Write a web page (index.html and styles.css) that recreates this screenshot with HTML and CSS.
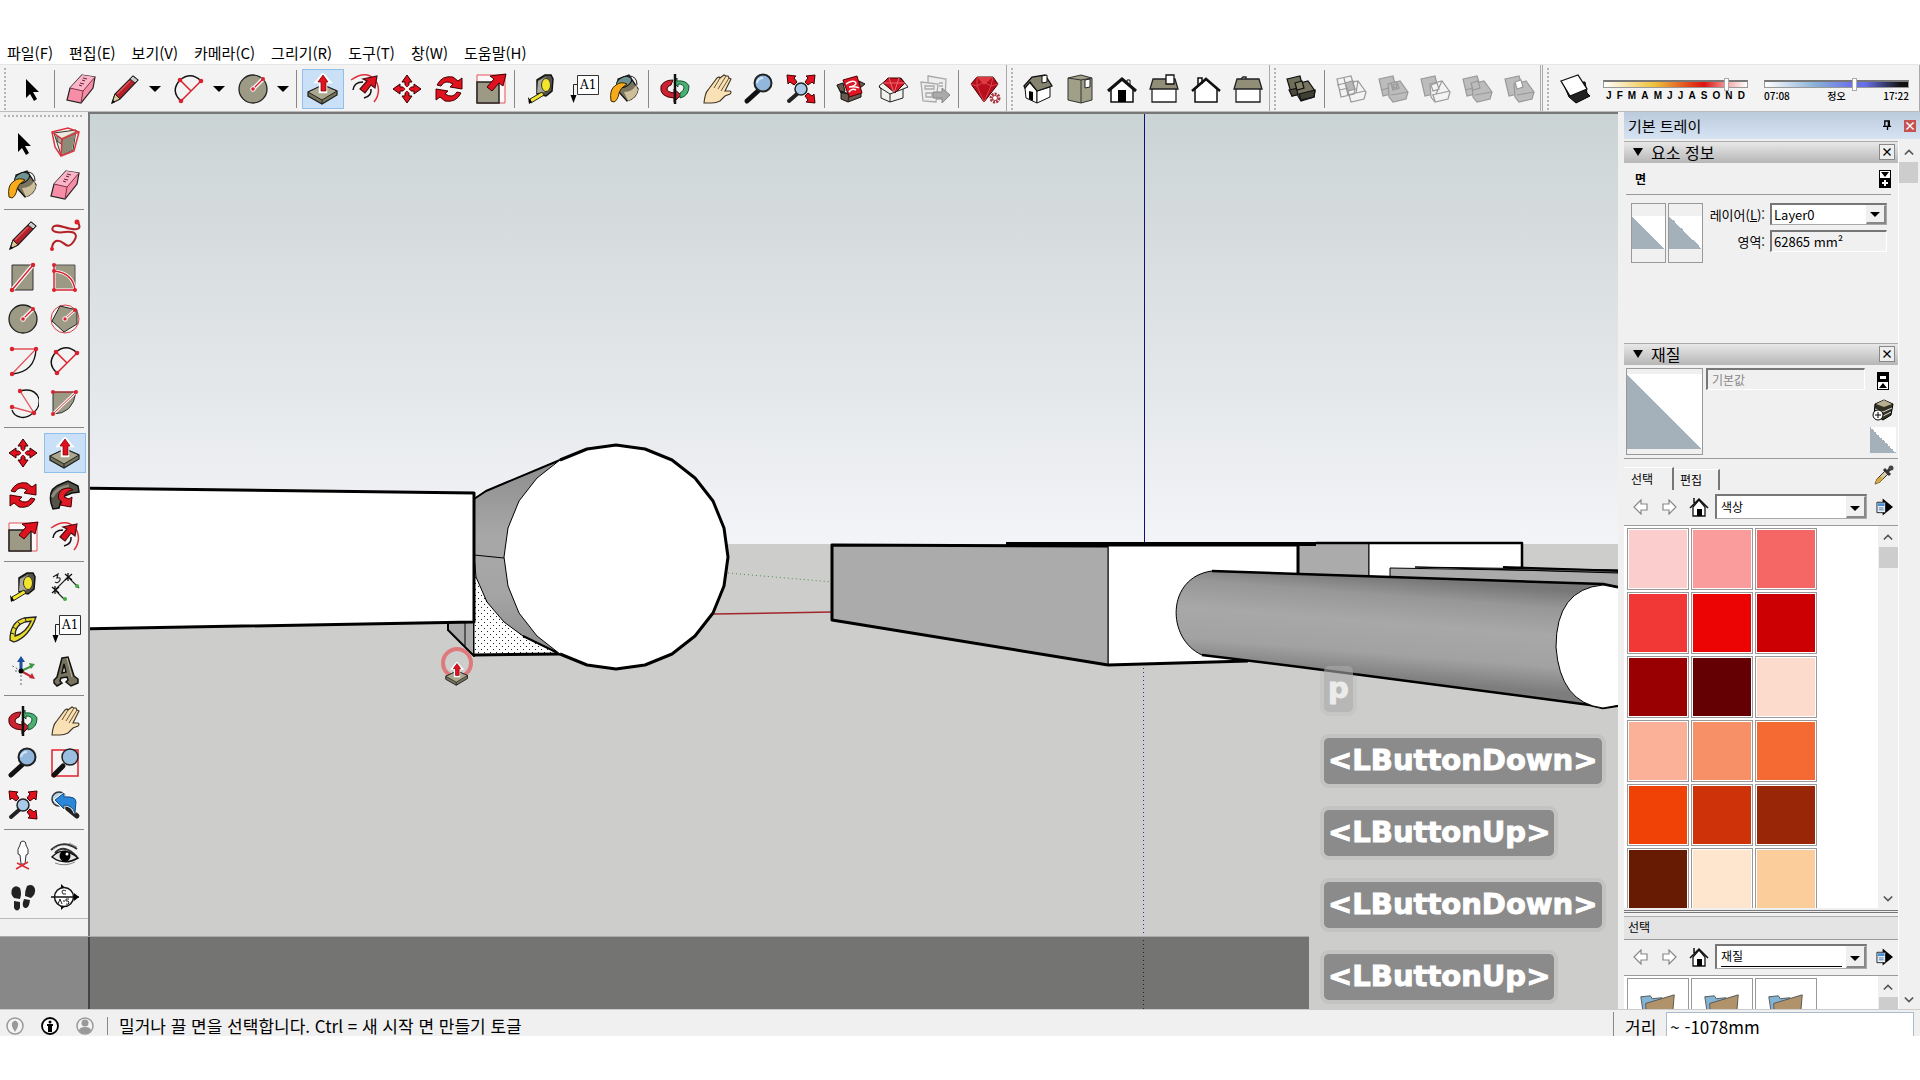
FILE: index.html
```html
<!DOCTYPE html>
<html lang="ko">
<head>
    <meta charset="UTF-8">
    <meta name="viewport" content="width=device-width, initial-scale=1.0">
    <title>SketchUp</title>
    <link rel="stylesheet" href="styles.css">
</head>
<body>
    <!-- Icon set -->
    <svg class="sprite" aria-hidden="true">
        <symbol id="i-select" viewBox="0 0 32 32"><path d="M11 6v19l4-4 4 7 3-2-4-7h6z"/></symbol>
        <symbol id="i-eraser" viewBox="0 0 32 32">
            <path d="M17 2l13 2-2 11-12 15-14-3 3-12z" fill="#f78da7" stroke="#222" stroke-width="1.2"/>
            <path d="M5 15l13 3L30 4 17 2z" fill="#fbb5c6"/><path d="M5 15l13 3-2 12M18 18L30 4" fill="none" stroke="#7d3347"/>
            <path d="M14 12l3 1M15 10l4 1M17 7l3 1M18 5l4 1" stroke="#5b2636"/>
        </symbol>
        <symbol id="i-pencil" viewBox="0 0 32 32">
            <path d="M3 30l3-9L24 3l5 4-18 19z" fill="#b5202a" stroke="#222" stroke-width="1.2"/>
            <path d="M3 30l3-9 5 5z" fill="#d9c897" stroke="#222"/><path d="M3 30l1-3 2 2z"/><path d="M21 6l5 4 3-3-5-4z" fill="#ccc" stroke="#222"/><path d="M8 21L21 8" stroke="#e4545b" stroke-width="1.5"/>
        </symbol>
        <symbol id="i-arc" viewBox="0 0 32 32">
            <path d="M7 7Q18-2 28 8M7 7Q-3 18 8 28" fill="none" stroke="#111" stroke-width="1.5"/>
            <path d="M7 7l11 11M28 8L8 28" stroke="#d8232f" stroke-width="1.5"/><g fill="#d8232f"><circle cx="7" cy="7" r="2.3"/><circle cx="28" cy="8" r="2.3"/><circle cx="8" cy="28" r="2.3"/></g>
        </symbol>
        <symbol id="i-circle" viewBox="0 0 32 32">
            <circle cx="16" cy="16" r="14" fill="#9c9a85" stroke="#222" stroke-width="1.3"/>
            <path d="M16 16L26 6" stroke="#fff" stroke-width="4"/><path d="M16 16L26 6" stroke="#d8232f" stroke-width="1.5"/>
            <circle cx="16" cy="16" r="2.3" fill="#d8232f" stroke="#fff"/><circle cx="26" cy="6" r="2" fill="#d8232f"/>
        </symbol>
        <symbol id="i-push" viewBox="0 0 32 32">
            <path d="M1 19l15-7 14 6v4L15 31 1 23z" fill="#77745c" stroke="#222" stroke-width="1.3"/>
            <path d="M1 19l15-7 14 6-15 9z" fill="#aaa78f" stroke="#222"/><path d="M15 27v4" stroke="#222"/>
            <path d="M16 1l7 8h-4v10h-6V9H9z" fill="#e0121f" stroke="#fff" stroke-width="2.5"/><path d="M16 2l5 7h-2v9h-5V9h-3z" fill="#e0121f" stroke="#700" stroke-width=".7"/>
        </symbol>
        <symbol id="i-offset" viewBox="0 0 32 32">
            <path d="M2 7Q19-5 28 10 32 20 25 29" fill="none" stroke="#e0303a" stroke-width="1.5"/>
            <path d="M4 17q1-8 10-8M15 25q8-2 7-9" fill="none" stroke="#111" stroke-width="1.5"/>
            <path d="M28 3l-2 12-4-3-6 8-5-4 7-8-4-2z" fill="#e0121f" stroke="#411" stroke-width="1.2"/>
        </symbol>
        <symbol id="i-move" viewBox="0 0 32 32">
            <path d="M16 2l5 7h-3v5h-4V9h-3zM16 30l5-7h-3v-5h-4v5h-3zM2 16l7-5v3h5v4H9v3zM30 16l-7-5v3h-5v4h5v3z" fill="#e0121f" stroke="#300" stroke-width="1"/>
            <path d="M12 12l8 8M20 12l-8 8" stroke="#fff" stroke-width="2"/>
        </symbol>
        <symbol id="i-rotate" viewBox="0 0 32 32">
            <g fill="#e0121f" stroke="#400" stroke-width="1"><path d="M4 12Q9 2 20 4l5 4 4-3v11l-12-2 3-3Q12 6 8 13z"/><path d="M28 20q-5 10-16 8l-5-4-4 3V16l12 2-3 3q8 5 12-2z"/></g>
        </symbol>
        <symbol id="i-scale" viewBox="0 0 32 32">
            <path d="M2 2h28v28H2z" fill="#fff8f8" stroke="#e2535b"/><path d="M2 9h22v21H2z" fill="#9c9a85" stroke="#222" stroke-width="1.5"/>
            <path d="M31 1l-3 12-4-3-7 8-5-4 7-8-4-3z" fill="#e0121f" stroke="#400" stroke-width="1"/>
        </symbol>
        <symbol id="i-tape" viewBox="0 0 32 32">
            <path d="M12 7l8-5h6l2 4-1 12-6 5-9-2z" fill="#54544a" stroke="#111" stroke-width="1.5"/><path d="M13 8l8-4-1 15-8 1z" fill="#a9a99c"/><ellipse cx="21" cy="12" rx="4.500" ry="6.500" fill="#f3e52c" stroke="#333"/>
            <path d="M17 19L5 26l1 4 13-8z" fill="#f3e52c" stroke="#222"/><path d="M3 24l4 5-3 2z"/>
        </symbol>
        <symbol id="i-label" viewBox="0 0 32 32">
            <path d="M10.500 2.500h21v19h-21z" fill="#fff" stroke="#333"/><path d="M10 11.500H6.500V25" fill="none" stroke="#222"/><path d="M3.500 22h6l-3 8z"/>
            <text x="13" y="16" class="glyph">A1</text>
        </symbol>
        <symbol id="i-bucket" viewBox="0 0 32 32">
            <path d="M9 6l11-4 9 14q-1 9-11 12L9 18z" fill="#7a745f" stroke="#111" stroke-width="1.3"/><path d="M15 19q9 0 12-7l2 5q-2 8-10 11z" fill="#cdbf9a"/>
            <ellipse cx="15" cy="9" rx="8" ry="5" transform="rotate(-25 15 9)" fill="#6f9393" stroke="#111"/><path d="M20 3q8 0 8 9" fill="none" stroke="#222"/>
            <path d="M2 28Q0 16 7 12q5-4 11-1-7 4-8 9-1 7-5 9z" fill="#f7ab1b" stroke="#3b2a00"/>
        </symbol>
        <symbol id="i-orbit" viewBox="0 0 32 32">
            <path d="M2 13q3-6 12-6l-2 5q-4 1-4 4t7 4v-4l7 6-7 7v-4Q0 24 2 13z" fill="#cc2333" stroke="#400"/>
            <path d="M30 13q-3-6-12-5V5l-3 5 4 4v-3q6 0 6 4 0 3-4 5v5q9-2 9-12z" fill="#4bb071" stroke="#153"/><path d="M16 1v30" stroke="#111" stroke-width="2.5"/>
        </symbol>
        <symbol id="i-pan" viewBox="0 0 32 32">
            <path d="M3 30q1-10 4-13L16 5l2-1 1 1 4-3 2 1 2 0 1 2 2 1-6 12 5 0q2 1 0 3l-5 2-5 5q-4 2-8 2z" fill="#fae1b5" stroke="#403524" stroke-width="1.1"/><path d="M19 5l-6 10M25 3l-8 13M28 5l-8 13" stroke="#665336" fill="none"/>
        </symbol>
        <symbol id="i-zoom" viewBox="0 0 32 32"><path d="M4 28l11-10" stroke="#111" stroke-width="5" stroke-linecap="round"/><circle cx="20" cy="10" r="8.500" fill="#91b7dc" stroke="#222" stroke-width="2"/><path d="M14 10q1-5 6-5" fill="none" stroke="#d3e6f5" stroke-width="2"/></symbol>
        <symbol id="i-extents" viewBox="0 0 32 32">
            <path d="M4 28l8-7" stroke="#222" stroke-width="4" stroke-linecap="round"/><circle cx="16" cy="16" r="6" fill="#a9c9e8" stroke="#222" stroke-width="1.5"/>
            <path d="M2 2l9 1-2 2 3 4-3 3-4-3-2 2zM30 2l-9 1 2 2-3 4 3 3 4-3 2 2zM30 30l-9-1 2-2-3-4 3-3 4 3 2-2z" fill="#e0121f" stroke="#400"/>
        </symbol>
        <symbol id="i-warehouse" viewBox="0 0 32 32">
            <path d="M2 12l6-2 2 8-4 2zM24 8l6 3-5 4zM6 18l8 3 12-4v7l-13 5-7-3z" fill="#675b50" stroke="#111"/><path d="M8 7l14-4 5 17-13 4z" fill="#df1725" stroke="#500"/><path d="M11 11q8-5 10-1 0 3-7 4 7-1 10 1M14 19q3-4 7-2" fill="none" stroke="#fff" stroke-width="1.5"/><path d="M2 12l4 8 8 1-1 8" fill="none" stroke="#222"/>
        </symbol>
        <symbol id="i-extension" viewBox="0 0 32 32"><path d="M2 13l6-5 16-3 7 9-5 2v9l-13 4-9-4V16z" fill="#f1f1ee" stroke="#222"/><path d="M6 10l5-5h12l5 5-10 10z" fill="#cc1626" stroke="#400"/><path d="M6 10h22M12 5l5 15 5-15" fill="none" stroke="#ef6972"/><path d="M2 14l11 7 13-5M13 21v8" fill="none" stroke="#222"/></symbol>
        <symbol id="i-layout" viewBox="0 0 32 32"><g fill="#eee" stroke="#aaa" stroke-width="1.3"><path d="M9 3l18 3-1 20H9z"/><path d="M2 9l17 2-2 18-13-1z"/><path d="M6 13h9v3H6zM7 20h6v4H7zM20 10h4M20 13h4"/></g><path d="M14 19h9v-4l8 7-8 8v-5h-9z" fill="#aaa" stroke="#888"/></symbol>
        <symbol id="i-gem" viewBox="0 0 32 32"><path d="M2 11l6-7h16l5 7-14 18z" fill="#b80f1c" stroke="#400"/><path d="M8 4l7 8 9-8z" fill="#e0383f"/><path d="M2 11l6 2 7 16 7-16 7-2M8 4v9l7-4 7 4 2-9" fill="none" stroke="#d9444c"/><circle cx="26" cy="25" r="4" fill="#fff" stroke="#a5333c" stroke-width="3" stroke-dasharray="2 1"/><circle cx="26" cy="25" r="2.500" fill="#fff" stroke="#a5333c"/></symbol>
        <symbol id="i-iso" viewBox="0 0 32 32"><path d="M3 15l4-6 8 9v12L4 25z" fill="#fff" stroke="#111"/><path d="M15 18l13-4v10l-13 6z" fill="#fff" stroke="#111"/><path d="M2 13L10 4l13-2 7 11-15 5-7-9-5 6z" fill="#85836e" stroke="#111" stroke-width="1.3"/><path d="M20 3l5-1v7l-5 1z" fill="#fff" stroke="#111"/><path d="M7 18l4 1v9l-4-2z"/></symbol>
        <symbol id="i-top" viewBox="0 0 32 32"><path d="M4 5l13-3 11 3v22l-11 3-13-3z" fill="#a09f88" stroke="#333"/><path d="M17 7v23M4 5l13 2 11-2" fill="none" stroke="#333"/><path d="M21 7l5-1v8l-5 1z" fill="#fff" stroke="#222"/></symbol>
        <symbol id="i-front" viewBox="0 0 32 32"><path d="M5 15L16 6l11 9v14H5z" fill="#fff" stroke="#111" stroke-width="1.5"/><path d="M21 10V7h3v6" fill="#fff" stroke="#111"/><path d="M2 18L16 6l14 12" fill="none" stroke="#111" stroke-width="3"/><path d="M12 17h8v12h-8z"/></symbol>
        <symbol id="i-right" viewBox="0 0 32 32"><path d="M4 15h24v14H4z" fill="#fff" stroke="#222" stroke-width="1.3"/><path d="M5 6h22l3 10H2z" fill="#918e77" stroke="#222" stroke-width="1.3"/><path d="M18 2h8v9h-8z" fill="#fff" stroke="#111" stroke-width="1.3"/></symbol>
        <symbol id="i-back" viewBox="0 0 32 32"><path d="M8 12V5h4v6M5 16L16 6l11 10v13H5z" fill="#fff" stroke="#111" stroke-width="1.5"/><path d="M2 18L16 6l14 12" fill="none" stroke="#111" stroke-width="2.500"/></symbol>
        <symbol id="i-left" viewBox="0 0 32 32"><path d="M9 6l2-2h3v3M4 15h24v14H4z" fill="#fff" stroke="#222" stroke-width="1.3"/><path d="M5 6h22l3 10H2z" fill="#918e77" stroke="#222" stroke-width="1.3"/></symbol>
        <symbol id="i-solid" viewBox="0 0 32 32"><g stroke="#111" stroke-width="1.2"><path d="M2 6l13-3 3 12 1 5-12 3z" fill="#6f6c58"/><path d="M4 17l14-3 1 6-12 3z" fill="#4d4b3d"/><path d="M11 11l12-3 7 10-1 6-13 4-3-5z" fill="#77745f"/><path d="M14 21l16-4-1 7-13 3z" fill="#403f33"/><path d="M10 10l7-2 2 7-7 2z" fill="#85826c"/></g></symbol>
        <symbol id="i-intersect" viewBox="0 0 32 32"><g fill="none" stroke="#999" stroke-width="1.2"><path d="M2 6l14-3 4 13-1 5-13 3zM2 12l18-4M4 17l15-3M9 5l4 17"/><path d="M11 11l12-3 8 11-2 7-13 3zM12 22l18-4M23 8l-2 12"/><path d="M10 10l7-2 3 8-7 2z" fill="#b7b7b7"/></g></symbol>
        <symbol id="i-union" viewBox="0 0 32 32"><g fill="#bcbcbc" stroke="#999" stroke-width="1.2"><path d="M2 6l14-3 3 12-1 5-12 3z"/><path d="M11 11l12-3 8 11-2 7-13 3-4-5z"/><path d="M14 22l17-3M4 17l8-2M14 10l6-1 2 6-6 2zM16 12l3-1 1 3-3 1z"/></g></symbol>
        <symbol id="i-subtract" viewBox="0 0 32 32"><g stroke="#999" stroke-width="1.2"><path d="M2 6l14-3 3 12-1 5-12 3z" fill="#bcbcbc"/><path d="M11 11l12-3 8 11-2 7-13 3-4-5z" fill="#f3f3f3"/><path d="M13 22l18-4M16 28l-2-6M23 8l-6 13M12 12l6-2 2 6-6 2z" fill="none"/></g></symbol>
        <symbol id="i-trim" viewBox="0 0 32 32"><g fill="#bcbcbc" stroke="#999" stroke-width="1.2"><path d="M2 6l14-3 4 12-1 5-13 3zM4 17l9-2"/><path d="M11 11l12-3 8 11-2 7-13 3-4-5zM14 22l17-3"/><path d="M10 10l7-2 2 7-7 2z"/></g></symbol>
        <symbol id="i-split" viewBox="0 0 32 32"><g fill="#bcbcbc" stroke="#999" stroke-width="1.2"><path d="M2 6l14-3 4 12-1 5-13 3z"/><path d="M11 11l12-3 8 11-2 7-13 3-4-5zM14 22l17-3"/><path d="M12 9l6-2 2 7-6 2z" fill="#fff"/></g></symbol>
        <symbol id="i-shadow" viewBox="0 0 32 32"><path d="M3 10l6 14 7 6 14-7-3-3-2-11z" fill="#222" stroke="#000"/><path d="M1 8l17-6 9 14-17 7z" fill="#fff" stroke="#111" stroke-width="1.3"/></symbol>
        <symbol id="i-component" viewBox="0 0 32 32"><path d="M5 6l22-3-3 20-12 5z" fill="#eceade" stroke="#333"/><path d="M13 11l14-7-4 19-10 5z" fill="#8d8b77"/><path d="M8 9l5 3-1 5-4-3z" fill="#aaa894" stroke="#444"/><path d="M3 5l16-4 11 4-5 19-13 5L6 20zM3 5l10 7 17-7M13 12l-1 17" fill="none" stroke="#dd343e" stroke-width="1.5"/></symbol>
        <symbol id="i-freehand" viewBox="0 0 32 32"><path d="M28 2q5 7 0 8C20 12 8 3 4 8c-3 5 5 6 12 5 11-1 13 3 9 9-8 12-10-3-18 0-4 2-4 6-4 8" fill="none" stroke="#b22229" stroke-width="2"/><circle cx="28" cy="3" r="2.500" fill="#df1e2a"/><circle cx="3" cy="30" r="2" fill="#df1e2a"/></symbol>
        <symbol id="i-rect" viewBox="0 0 32 32"><path d="M5 4h21v25H5z" fill="#9c9a85" stroke="#333"/><path d="M5 29L26 4" stroke="#fff" stroke-width="4"/><path d="M5 29L26 4" stroke="#d8232f" stroke-width="1.5"/><circle cx="5" cy="29" r="2.200" fill="#d8232f"/><circle cx="26" cy="4" r="2.200" fill="#d8232f"/></symbol>
        <symbol id="i-rrect" viewBox="0 0 32 32"><path d="M5 4h21v25H5z" fill="#9c9a85" stroke="#555"/><path d="M5 4v25h21Q24 12 5 10" fill="none" stroke="#fff" stroke-width="3"/><path d="M5 4v25h21Q24 12 5 10" fill="none" stroke="#d8232f" stroke-width="1.500"/><g fill="#d8232f"><circle cx="5" cy="4" r="2"/><circle cx="5" cy="10" r="2"/><circle cx="5" cy="29" r="2"/><circle cx="26" cy="29" r="2"/></g></symbol>
        <symbol id="i-polygon" viewBox="0 0 32 32"><circle cx="16" cy="16" r="14" fill="none" stroke="#dc3b45"/><path d="M11 3l17 4 0 14-13 8L3 18z" fill="#9c9a85" stroke="#222"/><path d="M16 16L26 7" stroke="#fff" stroke-width="3"/><path d="M16 16L26 7" stroke="#d8232f"/><circle cx="16" cy="16" r="2.200" fill="#d8232f" stroke="#fff"/><circle cx="26" cy="7" r="2" fill="#d8232f"/></symbol>
        <symbol id="i-arc2" viewBox="0 0 32 32"><path d="M29 4Q28 27 5 29" fill="none" stroke="#111" stroke-width="1.300"/><path d="M5 4h24L5 29" fill="none" stroke="#e2535b" stroke-width="1.300"/><g fill="#d8232f"><circle cx="5" cy="4" r="2.200"/><circle cx="29" cy="4" r="2.200"/><circle cx="5" cy="29" r="2.200"/></g></symbol>
        <symbol id="i-arc3" viewBox="0 0 32 32"><path d="M13 4q15-4 19 8 1 9-6 14-7 6-13 4-6-1-8-7" fill="none" stroke="#111" stroke-width="1.300"/><path d="M13 4l14 22L5 20" fill="none" stroke="#e2535b" stroke-width="1.300"/><g fill="#d8232f"><circle cx="13" cy="4" r="2.200"/><circle cx="27" cy="26" r="2.200"/><circle cx="5" cy="20" r="2.200"/></g></symbol>
        <symbol id="i-pie" viewBox="0 0 32 32"><path d="M4 5h23Q24 27 4 27z" fill="#9c9a85" stroke="#333"/><path d="M27 5L4 27" stroke="#fff" stroke-width="3"/><path d="M4 5h23L4 27" fill="none" stroke="#d8232f"/><g fill="#d8232f"><circle cx="4" cy="5" r="2"/><circle cx="27" cy="5" r="2"/><circle cx="4" cy="27" r="2"/></g></symbol>
        <symbol id="i-follow" viewBox="0 0 32 32"><path d="M2 24Q-1 9 12 5l7-3 10 5 1 6-7 1-10 4-3 11-6 1z" fill="#54534a" stroke="#111" stroke-width="1.500"/><path d="M3 18Q8 8 20 7" fill="none" stroke="#8e8b7c" stroke-width="3"/><path d="M12 11q8-4 12 0l-4 1q-4 2-5 6l5 2 3-2-1 10-11-2 2-3q-7-4-1-12z" fill="#df1c28" stroke="#400"/></symbol>
        <symbol id="i-dimension" viewBox="0 0 32 32"><path d="M6 19L19 6l11 11M6 19l10 10" fill="none" stroke="#222" stroke-width="1.200"/><path d="M3 16l7 6M3 22l7-6M16 3l7 6M16 9l7-6M19 2v8M6 15v8" stroke="#111" stroke-width="1.300"/><circle cx="28" cy="15" r="2" fill="#43ac45"/><circle cx="16" cy="28" r="2" fill="#43ac45"/><path d="M4 6l5-3-1 4q4-1 3 2-2 4-5 2" fill="none" stroke="#222" stroke-width="1.200"/></symbol>
        <symbol id="i-protractor" viewBox="0 0 32 32"><path fill-rule="evenodd" d="M29 4L17 5Q3 9 3 27l4 2Q22 24 29 4zM8 23q0-11 10-14l6-1Q19 20 8 23z" fill="#e8db2c" stroke="#222" stroke-width="1.300"/><path d="M4 20l3 1M6 14l3 2M11 9l2 2M18 5l1 3" stroke="#222"/></symbol>
        <symbol id="i-axes" viewBox="0 0 32 32"><path d="M14 16v14M14 16H6M14 16L4 10" stroke="#567" stroke-dasharray="2 2"/><path d="M14 16V5" stroke="#1e4e9e" stroke-width="3"/><path d="M10 7l4-6 4 6z" fill="#1e4e9e"/><path d="M14 16l11-5" stroke="#419744" stroke-width="2"/><path d="M22 8l6 1-4 5z" fill="#419744"/><path d="M14 16l11 6" stroke="#c42835" stroke-width="2"/><path d="M22 23l3-5 3 6z" fill="#c42835"/><circle cx="14" cy="16" r="2.500"/></symbol>
        <symbol id="i-3dtext" viewBox="0 0 32 32"><path fill-rule="evenodd" d="M13 3l6-1 6 19 4 3v4l-7 3-5-4 2-2-1-3-6 1-1 3 2 2-5 3-3-3v-3l3-3zM15 9l-2 9 4-1z" fill="#77735f" stroke="#111" stroke-width="1.500"/><path d="M18 3l5 19" stroke="#bcb8a3"/></symbol>
        <symbol id="i-window" viewBox="0 0 32 32"><path d="M3 3h26v26H3z" fill="none" stroke="#e0222d" stroke-width="1.500"/><path d="M5 28l9-9" stroke="#111" stroke-width="5" stroke-linecap="round"/><circle cx="21" cy="10" r="8" fill="#9bbfe0" stroke="#222" stroke-width="1.500"/></symbol>
        <symbol id="i-previous" viewBox="0 0 32 32"><circle cx="10" cy="10" r="7" fill="#b8d2ea" stroke="#333" stroke-width="1.500"/><path d="M17 18l11 9" stroke="#222" stroke-width="5" stroke-linecap="round"/><path d="M6 11l9-7v4q12-1 12 5l-1 11q-3-8-11-8v4z" fill="#2b87d8" stroke="#fff" stroke-width="2.500"/><path d="M6 11l9-7v4q12-1 12 5l-1 11q-3-8-11-8v4z" fill="#2b87d8" stroke="#124a83"/></symbol>
        <symbol id="i-position" viewBox="0 0 32 32"><path d="M13 6q0-4 3-4t3 4q3 4 2 9l-2 1-1 9h-4l-1-9-2-1q-1-5 2-9z" fill="#fff" stroke="#333"/><path d="M9 30l12-7M10 24l12 6" stroke="#df2935" stroke-width="1.500"/></symbol>
        <symbol id="i-look" viewBox="0 0 32 32"><path d="M2 11Q14 0 28 10M6 14Q15 4 28 18" fill="none" stroke="#333" stroke-width="2"/><path d="M3 18q11-12 26 1-14 8-26-1z" fill="#e6e6e6" stroke="#111" stroke-width="1.500"/><circle cx="16" cy="17" r="5.500"/><circle cx="18" cy="15" r="1.500" fill="#fff"/><path d="M6 24q10 4 20-1M4 10l4-2M20 4l8 4" stroke="#888" fill="none"/></symbol>
        <symbol id="i-walk" viewBox="0 0 32 32"><path d="M5 8q3-5 8-1 2 6 0 11l-6-1Q3 13 5 8zM7 20l6 1v6q-3 5-6 0zM20 5q6-3 8 3 1 5-4 9l-6-2q0-6 2-10zM17 18l6 1q-1 9-5 8-4-1-1-9z" fill="#222"/></symbol>
        <symbol id="i-section" viewBox="0 0 32 32"><path d="M12 3l14 13-14 13z"/><circle cx="15" cy="16" r="9.500" fill="#fff" stroke="#111" stroke-width="1.500"/><path d="M2 16h28" stroke="#111" stroke-width="1.500"/><path d="M25 12l5 4-5 4z"/><path d="M17 10q-4-2-4 1t4 2M9 23l2-5 2 5M14 20h2M20 18h-3v2q3-1 3 2-1 2-3 1" fill="none" stroke="#222"/></symbol>
        <symbol id="i-prev" viewBox="0 0 16 16"><path d="M1 8l7-7v4h6v6H8v4z" fill="#fff" stroke="#888" stroke-width="1.200"/></symbol>
        <symbol id="i-next" viewBox="0 0 16 16"><path d="M15 8L8 1v4H2v6h6v4z" fill="#fff" stroke="#888" stroke-width="1.200"/></symbol>
        <symbol id="i-home" viewBox="0 0 20 20"><path d="M4 10l6-7 6 7v9H4z" fill="#fff" stroke="#111" stroke-width="1.300"/><path d="M1 11l9-9 9 9M5 6V1" fill="none" stroke="#111" stroke-width="1.500"/><path d="M8 12h5v7H8z"/></symbol>
        <symbol id="i-details" viewBox="0 0 18 18"><path d="M7 0l11 9-11 9z"/><path d="M1 4h9v11H1z" fill="#e8f2fb" stroke="#222"/><path d="M2 5h7v3H2z" fill="#4a8fd8"/><path d="M3 10h5M3 12h5" stroke="#4a7baa"/></symbol>
        <symbol id="i-up" viewBox="0 0 12 12"><path d="M1 9l5-5 5 5" fill="none" stroke="#555" stroke-width="2"/></symbol>
        <symbol id="i-down" viewBox="0 0 12 12"><path d="M1 3l5 5 5-5" fill="none" stroke="#555" stroke-width="2"/></symbol>
        <symbol id="i-folder" viewBox="0 0 44 44"><path d="M4 5l10-1 2 3 10-1v30L9 38z" fill="#83b4d6" stroke="#555"/><path d="M9 12l30-9-3 36H11z" fill="#b0926b" stroke="#555"/></symbol>
    </svg>

    <div class="app">
        <nav class="menubar">
            <a href="#">파일(F)</a>
            <a href="#">편집(E)</a>
            <a href="#">보기(V)</a>
            <a href="#">카메라(C)</a>
            <a href="#">그리기(R)</a>
            <a href="#">도구(T)</a>
            <a href="#">창(W)</a>
            <a href="#">도움말(H)</a>
        </nav>

        <!-- Top toolbars -->
        <header class="toolbars">
            <div class="bar">
                <span class="grip"></span>
                <button class="tool" aria-label="선택"><svg><use href="#i-select"/></svg></button>
                <span class="sep"></span>
                <button class="tool" aria-label="지우개"><svg><use href="#i-eraser"/></svg></button>
                <button class="tool split" aria-label="선"><svg><use href="#i-pencil"/></svg></button>
                <button class="drop" aria-label="선 도구"></button>
                <button class="tool split" aria-label="호"><svg><use href="#i-arc"/></svg></button>
                <button class="drop" aria-label="호 도구"></button>
                <button class="tool split" aria-label="원"><svg><use href="#i-circle"/></svg></button>
                <button class="drop" aria-label="도형 도구"></button>
                <span class="sep"></span>
                <button class="tool active" aria-label="밀기/끌기"><svg><use href="#i-push"/></svg></button>
                <button class="tool" aria-label="오프셋"><svg><use href="#i-offset"/></svg></button>
                <button class="tool" aria-label="이동"><svg><use href="#i-move"/></svg></button>
                <button class="tool" aria-label="회전"><svg><use href="#i-rotate"/></svg></button>
                <button class="tool" aria-label="배율"><svg><use href="#i-scale"/></svg></button>
                <span class="sep"></span>
                <button class="tool" aria-label="줄자"><svg><use href="#i-tape"/></svg></button>
                <button class="tool" aria-label="텍스트"><svg><use href="#i-label"/></svg></button>
                <button class="tool" aria-label="페인트통"><svg><use href="#i-bucket"/></svg></button>
                <span class="sep"></span>
                <button class="tool" aria-label="궤도"><svg><use href="#i-orbit"/></svg></button>
                <button class="tool" aria-label="이동 보기"><svg><use href="#i-pan"/></svg></button>
                <button class="tool" aria-label="확대/축소"><svg><use href="#i-zoom"/></svg></button>
                <button class="tool" aria-label="범위 확대"><svg><use href="#i-extents"/></svg></button>
                <span class="sep"></span>
                <button class="tool" aria-label="3D Warehouse"><svg><use href="#i-warehouse"/></svg></button>
                <button class="tool" aria-label="Extension Warehouse"><svg><use href="#i-extension"/></svg></button>
                <button class="tool" aria-label="LayOut"><svg><use href="#i-layout"/></svg></button>
                <span class="sep"></span>
                <button class="tool" aria-label="확장 관리자"><svg><use href="#i-gem"/></svg></button>
            </div>
            <div class="bar">
                <span class="grip"></span>
                <button class="tool" aria-label="등각"><svg><use href="#i-iso"/></svg></button>
                <button class="tool" aria-label="위"><svg><use href="#i-top"/></svg></button>
                <button class="tool" aria-label="앞"><svg><use href="#i-front"/></svg></button>
                <button class="tool" aria-label="오른쪽"><svg><use href="#i-right"/></svg></button>
                <button class="tool" aria-label="뒤"><svg><use href="#i-back"/></svg></button>
                <button class="tool" aria-label="왼쪽"><svg><use href="#i-left"/></svg></button>
            </div>
            <div class="bar">
                <span class="grip"></span>
                <button class="tool" aria-label="외부 쉘"><svg><use href="#i-solid"/></svg></button>
                <span class="sep"></span>
                <button class="tool" aria-label="교차"><svg><use href="#i-intersect"/></svg></button>
                <button class="tool" aria-label="결합"><svg><use href="#i-union"/></svg></button>
                <button class="tool" aria-label="빼기"><svg><use href="#i-subtract"/></svg></button>
                <button class="tool" aria-label="자르기"><svg><use href="#i-trim"/></svg></button>
                <button class="tool" aria-label="분할"><svg><use href="#i-split"/></svg></button>
            </div>
            <div class="bar shadows">
                <span class="grip"></span>
                <button class="tool" aria-label="그림자"><svg><use href="#i-shadow"/></svg></button>
                <div class="slider">
                    <input class="month" type="range" min="0" max="100" value="87" aria-label="날짜">
                    <div class="ticks months"><span>J</span><span>F</span><span>M</span><span>A</span><span>M</span><span>J</span><span>J</span><span>A</span><span>S</span><span>O</span><span>N</span><span>D</span></div>
                </div>
                <div class="slider">
                    <input class="hour" type="range" min="0" max="100" value="63" aria-label="시간">
                    <div class="ticks"><span>07:08</span><span>정오</span><span>17:22</span></div>
                </div>
            </div>
        </header>

        <main class="work">
            <!-- Large tool set -->
            <aside class="toolset">
                <div class="toolset-inner">
                    <span class="grip wide"></span>
                    <div class="tools">
                        <button class="tool" aria-label="선택"><svg><use href="#i-select"/></svg></button>
                        <button class="tool" aria-label="구성요소 만들기"><svg><use href="#i-component"/></svg></button>
                        <button class="tool" aria-label="페인트통"><svg><use href="#i-bucket"/></svg></button>
                        <button class="tool" aria-label="지우개"><svg><use href="#i-eraser"/></svg></button>
                    </div>
                    <div class="tools">
                        <button class="tool" aria-label="선"><svg><use href="#i-pencil"/></svg></button>
                        <button class="tool" aria-label="자유곡선"><svg><use href="#i-freehand"/></svg></button>
                        <button class="tool" aria-label="직사각형"><svg><use href="#i-rect"/></svg></button>
                        <button class="tool" aria-label="회전된 직사각형"><svg><use href="#i-rrect"/></svg></button>
                        <button class="tool" aria-label="원"><svg><use href="#i-circle"/></svg></button>
                        <button class="tool" aria-label="다각형"><svg><use href="#i-polygon"/></svg></button>
                        <button class="tool" aria-label="호"><svg><use href="#i-arc2"/></svg></button>
                        <button class="tool" aria-label="2점호"><svg><use href="#i-arc"/></svg></button>
                        <button class="tool" aria-label="3점호"><svg><use href="#i-arc3"/></svg></button>
                        <button class="tool" aria-label="파이"><svg><use href="#i-pie"/></svg></button>
                    </div>
                    <div class="tools">
                        <button class="tool" aria-label="이동"><svg><use href="#i-move"/></svg></button>
                        <button class="tool active" aria-label="밀기/끌기"><svg><use href="#i-push"/></svg></button>
                        <button class="tool" aria-label="회전"><svg><use href="#i-rotate"/></svg></button>
                        <button class="tool" aria-label="따라가기"><svg><use href="#i-follow"/></svg></button>
                        <button class="tool" aria-label="배율"><svg><use href="#i-scale"/></svg></button>
                        <button class="tool" aria-label="오프셋"><svg><use href="#i-offset"/></svg></button>
                    </div>
                    <div class="tools">
                        <button class="tool" aria-label="줄자"><svg><use href="#i-tape"/></svg></button>
                        <button class="tool" aria-label="치수"><svg><use href="#i-dimension"/></svg></button>
                        <button class="tool" aria-label="각도기"><svg><use href="#i-protractor"/></svg></button>
                        <button class="tool" aria-label="텍스트"><svg><use href="#i-label"/></svg></button>
                        <button class="tool" aria-label="축"><svg><use href="#i-axes"/></svg></button>
                        <button class="tool" aria-label="3D 텍스트"><svg><use href="#i-3dtext"/></svg></button>
                    </div>
                    <div class="tools">
                        <button class="tool" aria-label="궤도"><svg><use href="#i-orbit"/></svg></button>
                        <button class="tool" aria-label="이동 보기"><svg><use href="#i-pan"/></svg></button>
                        <button class="tool" aria-label="확대/축소"><svg><use href="#i-zoom"/></svg></button>
                        <button class="tool" aria-label="창 확대"><svg><use href="#i-window"/></svg></button>
                        <button class="tool" aria-label="범위 확대"><svg><use href="#i-extents"/></svg></button>
                        <button class="tool" aria-label="이전"><svg><use href="#i-previous"/></svg></button>
                    </div>
                    <div class="tools">
                        <button class="tool" aria-label="카메라 배치"><svg><use href="#i-position"/></svg></button>
                        <button class="tool" aria-label="둘러보기"><svg><use href="#i-look"/></svg></button>
                        <button class="tool" aria-label="걷기"><svg><use href="#i-walk"/></svg></button>
                        <button class="tool" aria-label="단면"><svg><use href="#i-section"/></svg></button>
                    </div>
                </div>
            </aside>

            <!-- Model view -->
            <section class="viewport">
                <svg class="scene" viewBox="90 114 1528 895" preserveAspectRatio="xMidYMid slice">
                    <defs>
                        <linearGradient id="sky" x1="0" y1="0" x2="0" y2="1"><stop offset="0" stop-color="#cbd4d5"/><stop offset=".5" stop-color="#dfe3e5"/><stop offset="1" stop-color="#f3f4f8"/></linearGradient>
                        <linearGradient id="tube" gradientUnits="userSpaceOnUse" x1="1404" y1="578" x2="1396" y2="680"><stop offset="0" stop-color="#777"/><stop offset=".18" stop-color="#979797"/><stop offset=".45" stop-color="#a8a8a8"/><stop offset=".75" stop-color="#a2a2a2"/><stop offset="1" stop-color="#7d7d7d"/></linearGradient>
                        <linearGradient id="cone" x1="0" y1="0" x2="0" y2="1"><stop offset="0" stop-color="#8c8c8c"/><stop offset=".4" stop-color="#a8a8a8"/><stop offset=".7" stop-color="#a4a4a4"/><stop offset="1" stop-color="#8d8d8d"/></linearGradient>
                        <pattern id="dots" width="6" height="6" patternUnits="userSpaceOnUse"><path d="M0 0h6v6H0z" fill="#fff"/><path d="M1 1h1v1H1zM4 4h1v1H4z" fill="#222"/></pattern>
                    </defs>
                    <path d="M90 114h1528v430H90z" fill="url(#sky)"/>
                    <path d="M90 544h1528v465H90z" fill="#cdcdcb"/>

                    <!-- axes -->
                    <path d="M728 573l104 9" stroke="#4a8a4a" stroke-dasharray="1 3"/>
                    <path d="M713 614l119-2" stroke="#a3262b" stroke-width="1.500"/>
                    <path d="M1144.500 114v430" stroke="#101078"/>
                    <path d="M1143.500 664v345" stroke="#33339a" stroke-dasharray="1 3"/>

                    <g stroke="#000" stroke-linejoin="round">
                        <!-- left block and dowel -->
                        <path d="M448 622v8l26 26v-34z" fill="#ababab" stroke-width="2"/><path d="M465 622v24"/>
                        <path d="M474 555v100l84-1-40-24-31-28z" fill="url(#dots)"/>
                        <path d="M474 655l86-1" stroke-width="3"/>
                        <path d="M474 499l12-8 74-31v194l-37-18-19-14-17-20-11-25-2-22z" fill="url(#cone)"/>
                        <path d="M474 499l12-8 74-31M523 636l37 18" fill="none" stroke-width="2"/>
                        <path d="M474 555l30 3"/>
                        <path d="M80 488l394 5v129l-394 7z" fill="#fff" stroke-width="3"/>
                        <path d="M728 557l-4 29-11 27-18 23-23 18-27 11-29 4-29-4-27-11-23-18-18-23-11-27-4-29 4-29 11-27 18-23 23-18 27-11 29-4 29 4 27 11 23 18 18 23 11 27z" fill="#fff"/>
                        <path d="M560 460l27-11 29-4 29 4 27 11 23 18 18 23 11 27 4 29-4 29-11 27-18 23-23 18-27 11-29 4-29-4-27-11" fill="none" stroke-width="3"/>

                        <!-- right frame -->
                        <path d="M1297 543h72v36h-72z" fill="#ababab"/>
                        <path d="M1369 543h153v24l-100 14h-53z" fill="#fff"/>
                        <path d="M1316 543h206v24" fill="none" stroke-width="2.500"/>
                        <path d="M1390 568l240 4v16l-240-7z" fill="#ababab"/>
                        <path d="M1415 567l203 6v-3z" fill="#555"/><path d="M1503 567l120 4" stroke-width="2"/>
                        <path d="M1108 546h190v50l-50 65-140 4z" fill="#fff"/>
                        <path d="M1108 665l140-4M1298 546v30" stroke-width="3"/>
                        <path d="M832 545l276 1v119l-276-45z" fill="#ababab"/>
                        <path d="M1108 546l-276-1v75l276 45" fill="none" stroke-width="3"/>
                        <path d="M1006 544h310" stroke-width="4"/>
                        <path d="M1212 571l88 3 303 10 47 60-48 64-12-3-290-38-98-12c-36-16-36-78 10-84z" fill="url(#tube)"/>
                        <path d="M1212 571l88 3 303 10 20 4M1202 655l98 12 290 38 13 3 20-3" fill="none" stroke-width="2.500"/>
                        <path d="M1603 585q-47 4-47 62 4 56 47 61l50-9V595z" fill="#fff"/>
                    </g>
                    <!-- cursor -->
                    <circle cx="457" cy="663" r="14" fill="none" stroke="#df7a7c" stroke-width="4"/>
                    <use href="#i-push" x="444" y="662" width="26" height="24"/>
                </svg>
                <div class="keys">
                    <kbd class="faded">p</kbd>
                    <kbd>&lt;LButtonDown&gt;</kbd>
                    <kbd>&lt;LButtonUp&gt;</kbd>
                    <kbd>&lt;LButtonDown&gt;</kbd>
                    <kbd>&lt;LButtonUp&gt;</kbd>
                </div>
            </section>

            <!-- Tray -->
            <aside class="tray">
                <div class="tray-title">
                    <h1>기본 트레이</h1>
                    <button class="pin" aria-label="고정"><svg viewBox="0 0 10 12"><path d="M2 1h5v6H2zM0 7h9M5 7v4M6 1v6" fill="none" stroke="#000" stroke-width="1.500"/></svg></button>
                    <button class="close red" aria-label="트레이 닫기">×</button>
                </div>
                <div class="tray-body">
                    <div class="panels">
                        <section class="entity">
                            <h2>요소 정보<button class="close" aria-label="닫기">×</button></h2>
                            <div class="entity-kind">
                                <strong>면</strong>
                                <button class="toggle" aria-label="세부 정보"><svg viewBox="0 0 12 18"><path d="M0 0h12v18H0z"/><path d="M1 1h10v7H1z" fill="#fff"/><path d="M2 2h8L6 7z"/><path d="M3 13h6M6 10v6" stroke="#fff" stroke-width="2"/></svg></button>
                            </div>
                            <div class="entity-info">
                                <div class="faces"><span class="face"></span><span class="face"></span></div>
                                <div class="fields">
                                    <label for="layer">레이어(<u>L</u>):</label>
                                    <div class="combo"><select id="layer"><option>Layer0</option></select></div>
                                    <label for="area">영역:</label>
                                    <input id="area" class="field" type="text" value="62865 mm²" readonly>
                                </div>
                            </div>
                        </section>

                        <section class="materials">
                            <h2>재질<button class="close" aria-label="닫기">×</button></h2>
                            <div class="material">
                                <span class="face big"></span>
                                <input class="field muted" type="text" value="기본값" aria-label="재질 이름" readonly>
                                <div class="material-side">
                                    <button class="toggle" aria-label="보조 창"><svg viewBox="0 0 12 18"><path d="M0 0h12v18H0z"/><path d="M1 10h10v7H1z" fill="#fff"/><path d="M2 16h8l-4-5z"/><path d="M3 4h6v3H3z" fill="#fff"/></svg></button>
                                    <button class="create" aria-label="재질 만들기"><svg viewBox="0 0 22 22"><path d="M3 5l9-4 9 4-2 11-8 5-9-5z" fill="#332f24" stroke="#000"/><path d="M4 5l8-4 8 4-8 3z" fill="#b7af91"/><path d="M3 10l8 3 9-4M11 17l8-4" stroke="#ddd" fill="none"/><circle cx="6" cy="16" r="5" fill="#fff" stroke="#000"/><path d="M3 16h6M6 13v6" stroke="#000"/></svg></button>
                                    <span class="face plain"></span>
                                </div>
                            </div>
                            <div class="tabs">
                                <button class="tab current">선택</button>
                                <button class="tab">편집</button>
                                <button class="dropper" aria-label="색 추출"><svg viewBox="0 0 20 20"><path d="M1 19l2-5 9-9 3 3-9 9z" fill="#d5cba9" stroke="#333"/><path d="M1 19l2-5 4-3 2 3-3 3z" fill="#d5a93b"/><path d="M10 4l6 6M13 7l4-4" stroke="#333" stroke-width="3"/><circle cx="17" cy="3" r="2.500" fill="#444"/></svg></button>
                            </div>
                            <div class="browse">
                                <button aria-label="뒤로"><svg class="nav"><use href="#i-prev"/></svg></button>
                                <button aria-label="앞으로"><svg class="nav"><use href="#i-next"/></svg></button>
                                <button aria-label="모델에서"><svg class="home"><use href="#i-home"/></svg></button>
                                <div class="combo tall"><select aria-label="재질 라이브러리"><option>색상</option></select></div>
                                <button aria-label="세부 정보"><svg class="details"><use href="#i-details"/></svg></button>
                            </div>
                            <div class="library">
                                <div class="swatches colors">
                                    <button aria-label="색 1"></button><button aria-label="색 2"></button><button aria-label="색 3"></button>
                                    <button aria-label="색 4"></button><button aria-label="색 5"></button><button aria-label="색 6"></button>
                                    <button aria-label="색 7"></button><button aria-label="색 8"></button><button aria-label="색 9"></button>
                                    <button aria-label="색 10"></button><button aria-label="색 11"></button><button aria-label="색 12"></button>
                                    <button aria-label="색 13"></button><button aria-label="색 14"></button><button aria-label="색 15"></button>
                                    <button aria-label="색 16"></button><button aria-label="색 17"></button><button aria-label="색 18"></button>
                                </div>
                                <div class="scrollbar"><svg><use href="#i-up"/></svg><span class="thumb"></span><svg class="end"><use href="#i-down"/></svg></div>
                            </div>
                        </section>

                        <section class="second">
                            <h3>선택</h3>
                            <div class="browse">
                                <button aria-label="뒤로"><svg class="nav"><use href="#i-prev"/></svg></button>
                                <button aria-label="앞으로"><svg class="nav"><use href="#i-next"/></svg></button>
                                <button aria-label="모델에서"><svg class="home"><use href="#i-home"/></svg></button>
                                <div class="combo tall lined"><select aria-label="보조 라이브러리"><option>재질</option></select></div>
                                <button aria-label="세부 정보"><svg class="details"><use href="#i-details"/></svg></button>
                            </div>
                            <div class="library short">
                                <div class="swatches folders">
                                    <button aria-label="폴더 1"><svg><use href="#i-folder"/></svg></button>
                                    <button aria-label="폴더 2"><svg><use href="#i-folder"/></svg></button>
                                    <button aria-label="폴더 3"><svg><use href="#i-folder"/></svg></button>
                                </div>
                                <div class="scrollbar"><svg><use href="#i-up"/></svg><span class="thumb"></span></div>
                            </div>
                        </section>
                    </div>
                    <div class="scrollbar outer"><svg><use href="#i-up"/></svg><span class="thumb"></span><svg class="end"><use href="#i-down"/></svg></div>
                </div>
            </aside>
            <div class="caption"></div>
        </main>

        <footer class="status">
            <div class="status-left">
                <svg viewBox="0 0 18 18"><circle cx="9" cy="9" r="8" fill="#f4f4f4" stroke="#999" stroke-width="1.500"/><path d="M9 15Q5 9 6 6q3-5 6 0 1 3-3 9z" fill="#999"/></svg>
                <svg viewBox="0 0 18 18"><circle cx="9" cy="9" r="8" fill="#fff" stroke="#000" stroke-width="1.800"/><circle cx="9" cy="5" r="1.500"/><path d="M6 7h6v2h-1v6H7V9H6z"/></svg>
                <svg viewBox="0 0 18 18"><circle cx="9" cy="9" r="8" fill="#f4f4f4" stroke="#999" stroke-width="1.500"/><circle cx="9" cy="6" r="3.500" fill="#999"/><path d="M3 14q0-4 6-4t6 4q-6 5-12 0z" fill="#999"/></svg>
                <span class="hint">밀거나 끌 면을 선택합니다. Ctrl = 새 시작 면 만들기 토글</span>
            </div>
            <div class="measure">
                <label for="distance">거리</label>
                <input id="distance" type="text" value="~ -1078mm">
            </div>
        </footer>
    </div>
</body>
</html>
```

FILE: styles.css
```css
*, *::before, *::after {
    box-sizing: border-box;
}

body {
    margin: 0;
    background: #fff;
    color: #000;
    font-family: "Noto Sans CJK KR", "Liberation Sans", sans-serif;
    font-size: 12px;
}

button, input, select {
    font: inherit;
    color: inherit;
    margin: 0;
    padding: 0;
    border: none;
    border-radius: 0;
    background: none;
}

h1, h2, h3 {
    margin: 0;
    font-weight: normal;
}

.sprite {
    display: none;
}

.glyph {
    font-family: "DejaVu Serif", serif;
    font-size: 12px;
}

.app {
    display: flex;
    flex-direction: column;
    height: 100vh;
    padding: 40px 0 44px;
}

/* Menu */
.menubar {
    display: flex;
    gap: 16px;
    height: 24px;
    padding-left: 7px;
    font-size: 15px;
    line-height: 26px;
}

.menubar a {
    color: #000;
    text-decoration: none;
}

/* Toolbars */
.toolbars {
    display: flex;
    height: 48px;
    background: #f3f3f3;
    border-top: 1px solid #e6e6e6;
    border-bottom: 1px solid #bbb;
}

.bar {
    display: flex;
    align-items: center;
    padding: 2px 0 0 4px;
    border-right: 1px solid #aaa;
}

.grip {
    width: 2px;
    height: 42px;
    margin-right: 4px;
    background: repeating-linear-gradient(#b5b5b5 0 2px, transparent 2px 4px);
}

.grip.wide {
    display: block;
    width: auto;
    height: 2px;
    margin: 0 2px 6px;
    background: repeating-linear-gradient(90deg, #b5b5b5 0 2px, transparent 2px 4px);
}

.tool {
    display: flex;
    align-items: center;
    justify-content: center;
    width: 42px;
    height: 40px;
    border: 1px solid transparent;
}

.tool.split {
    padding-left: 4px;
}

.tool svg {
    flex: none;
    width: 32px;
    height: 32px;
}

.tool.active {
    background: #c9e0f7;
    border-color: #90c0ea;
}

.drop {
    width: 22px;
    height: 40px;
}

.drop::before {
    content: "";
    display: block;
    width: 12px;
    margin: 0 auto;
    border: 6px solid transparent;
    border-top-color: #000;
    border-bottom: none;
}

.sep {
    width: 1px;
    height: 38px;
    margin: 0 5px 0 2px;
    background: #888;
}

.shadows {
    flex: 1;
    padding-right: 10px;
    border-left: 1px solid #aaa;
    margin-left: 1px;
    gap: 2px;
}

.slider {
    flex: 1;
    margin: 4px 0 0 4px;
}

.slider + .slider {
    margin-left: 14px;
}

.slider input {
    display: block;
    appearance: none;
    width: 100%;
    height: 8px;
    border: 1px solid #999;
    border-top: 2px solid #777;
}

.slider input::-webkit-slider-thumb {
    appearance: none;
    width: 5px;
    height: 13px;
    background: #fff;
    border: 1px solid #aaa;
}

.month {
    background: linear-gradient(90deg, #fff, #edc23a 35%, #d11 70%, #f6b0b0 88%, #fff);
}

.hour {
    background: linear-gradient(90deg, #fff, #89b1d6 35%, #6b74e8 60%, #6870e8 70%, #111 95%);
}

.ticks {
    display: flex;
    justify-content: space-between;
    margin-top: 1px;
    font-size: 10px;
    font-weight: 500;
    line-height: 14px;
}

.months {
    padding: 0 3px;
    font-weight: bold;
    font-family: "Liberation Sans", sans-serif;
}

/* Work area */
.work {
    position: relative;
    display: grid;
    grid-template-columns: 88px minmax(0, 1fr) 302px;
    flex: 1;
    min-height: 0;
    overflow: hidden;
}

.toolset {
    background: #f0f0f0;
    padding-top: 3px;
}

.toolset-inner {
    padding: 0 2px 1px;
    background: #f3f3f3;
    border-bottom: 1px solid #bbb;
}

.tools {
    display: grid;
    grid-template-columns: 42px 42px;
    row-gap: 2px;
    padding-bottom: 4px;
}

.tools + .tools {
    padding-top: 6px;
    background: linear-gradient(#888, #888) 2px 0 / 80px 1px no-repeat;
}

.tools:last-child {
    padding-bottom: 0;
}

.viewport {
    position: relative;
    overflow: hidden;
    border-left: 2px solid #777;
    border-top: 2px solid #777;
}

.scene {
    display: block;
    width: 100%;
    height: 100%;
}

/* Key press overlay */
.keys {
    position: absolute;
    right: 15px;
    bottom: 9px;
    width: 279px;
    display: flex;
    flex-direction: column;
    align-items: flex-start;
    gap: 26px;
}

kbd {
    padding: 0 4px 2px;
    font-family: "DejaVu Sans", sans-serif;
    font-weight: bold;
    font-size: 29px;
    line-height: 44px;
    color: #fff;
    background: #8b8b8b;
    border-radius: 5px;
    box-shadow: 0 0 0 4px rgba(139, 139, 139, 0.15);
    -webkit-text-stroke: 1px #fff;
}

kbd.faded {
    opacity: 0.6;
    background: #aaa;
}

.caption {
    position: absolute;
    left: 0;
    bottom: 0;
    width: 68.2%;
    height: 73px;
    background: rgba(0, 0, 0, 0.43);
    border-top: 1px solid #aaa;
}

/* Tray */
.tray {
    display: flex;
    flex-direction: column;
    min-height: 0;
    padding-left: 6px;
    background: #f0f0f0;
}

.tray-title {
    display: flex;
    align-items: center;
    gap: 12px;
    height: 27px;
    padding: 0 4px;
    background: linear-gradient(#bccadd, #d6e3f3);
}

.tray-title h1 {
    flex: 1;
    font-size: 15px;
    line-height: 24px;
}

.pin svg {
    display: block;
    width: 9px;
    height: 11px;
}

.close {
    width: 16px;
    height: 16px;
    border: 1px solid #888;
    background: #eee;
    font-size: 12px;
    line-height: 12px;
    font-weight: bold;
}

.close.red {
    width: 12px;
    height: 12px;
    border: none;
    background: #c75050;
    color: #fff;
    font-size: 12px;
}

.tray-body {
    display: flex;
    flex: 1;
    min-height: 0;
    padding: 2px 2px 0 0;
}

.panels {
    display: flex;
    flex-direction: column;
    flex: 1;
    min-width: 0;
    min-height: 0;
}

h2 {
    display: flex;
    align-items: center;
    height: 22px;
    padding: 0 3px 2px 9px;
    background: linear-gradient(#e8e8e8, #b6b6b6);
    border-top: 1px solid #aaa;
    font-size: 16px;
    line-height: 18px;
}

h2::before {
    content: "";
    margin-right: 8px;
    border: 5px solid transparent;
    border-top: 8px solid #000;
    border-bottom: none;
}

h2 .close {
    margin-left: auto;
}

.entity {
    padding-bottom: 80px;
}

.entity-kind {
    display: flex;
    justify-content: space-between;
    align-items: center;
    height: 32px;
    margin: 0 7px 0 2px;
    padding-left: 9px;
    border-bottom: 1px solid #999;
}

.toggle svg {
    display: block;
    width: 12px;
    height: 18px;
}

.entity-info {
    display: flex;
    justify-content: space-between;
    padding: 8px 11px 0 7px;
}

.faces {
    display: flex;
    gap: 2px;
}

.face {
    width: 35px;
    height: 60px;
    border: 1px solid #999;
    background: linear-gradient(45deg, #a4b1ba 50%, #fff 50%) 0 12px / 33px 33px no-repeat;
}

.fields {
    display: grid;
    grid-template-columns: auto 117px;
    align-content: start;
    align-items: center;
    gap: 5px;
    font-size: 13px;
    text-align: right;
}

.combo {
    position: relative;
    flex: 1;
    height: 22px;
    background: #fff;
    border: 1px solid #aaa;
    border-top: 2px solid #777;
    border-left: 2px solid #777;
}

.combo select {
    display: block;
    appearance: none;
    width: 100%;
    height: 100%;
    padding-left: 2px;
    line-height: 16px;
}

.combo::after {
    content: "";
    position: absolute;
    top: 0;
    right: 0;
    width: 20px;
    height: 100%;
    border: 1px solid #eee;
    border-right: 2px solid #888;
    border-bottom: 2px solid #888;
    background: #f0f0f0;
    pointer-events: none;
}

.combo::before {
    content: "";
    position: absolute;
    z-index: 1;
    top: 7px;
    right: 6px;
    border: 5px solid transparent;
    border-top-color: #000;
    border-bottom: none;
    pointer-events: none;
}

.combo.tall {
    height: 25px;
}

.combo.tall select {
    padding-left: 4px;
}

.combo.tall::before {
    top: 10px;
}

.combo.lined select {
    width: calc(100% - 28px);
    height: 21px;
    margin-left: 4px;
    padding-left: 0;
    border-bottom: 1px solid #000;
}

.field {
    width: 100%;
    height: 22px;
    padding-left: 2px;
    border: 1px solid #fff;
    border-top: 2px solid #777;
    border-left: 2px solid #777;
    line-height: 18px;
}

.field.muted {
    flex: 1;
    width: 0;
    padding-left: 4px;
    color: #888;
}

/* Materials */
.materials {
    display: flex;
    flex-direction: column;
    flex: 1;
    min-height: 0;
}

.material {
    display: flex;
    align-items: flex-start;
    gap: 3px;
    padding: 3px 0 3px 2px;
    border-bottom: 1px solid #999;
}

.face.big {
    width: 77px;
    height: 87px;
    background-position: 0 5px;
    background-size: 75px 75px;
}

.face.plain {
    width: 26px;
    height: 26px;
    border: none;
    background-position: 0 0;
    background-size: 100% 100%;
}

.material-side {
    display: flex;
    flex-direction: column;
    align-items: center;
    gap: 9px;
    width: 30px;
    padding-top: 4px;
}

.create svg {
    display: block;
    width: 22px;
    height: 22px;
}

.material-side .face {
    margin-top: -3px;
}

.tabs {
    display: flex;
    align-items: flex-end;
    height: 31px;
}

.tab {
    width: 46px;
    height: 21px;
    text-align: left;
    padding-left: 6px;
    border-top: 1px solid #fff;
    border-right: 2px solid #777;
    line-height: 18px;
}

.tab.current {
    width: 50px;
    height: 23px;
    padding-left: 7px;
}

.dropper {
    margin: 0 4px 5px auto;
}

.dropper svg {
    display: block;
    width: 20px;
    height: 20px;
}

.browse {
    display: flex;
    align-items: center;
    height: 36px;
    padding: 0 5px 2px 9px;
    gap: 9px;
    border-bottom: 1px solid #999;
}

.browse button + button {
    margin-left: 3px;
}

.browse .combo {
    margin-left: -3px;
}

.browse svg {
    display: block;
}

.nav {
    width: 16px;
    height: 16px;
}

.home {
    width: 20px;
    height: 20px;
}

.details {
    width: 17px;
    height: 18px;
}

.library {
    display: flex;
    flex: 1;
    min-height: 0;
    overflow: hidden;
    background: #fff;
}

.swatches {
    display: grid;
    grid-template-columns: 62px 62px 62px;
    grid-auto-rows: 62px;
    gap: 2px;
    flex: 1;
    padding: 2px 0 0 3px;
}

.swatches button {
    padding: 1px;
    border: 1px solid #999;
    background-clip: content-box;
}

.colors button:nth-child(1) { background-color: #fbcdcd; }
.colors button:nth-child(2) { background-color: #f99c9b; }
.colors button:nth-child(3) { background-color: #f56765; }
.colors button:nth-child(4) { background-color: #f13837; }
.colors button:nth-child(5) { background-color: #ec0404; }
.colors button:nth-child(6) { background-color: #cc0003; }
.colors button:nth-child(7) { background-color: #990002; }
.colors button:nth-child(8) { background-color: #640003; }
.colors button:nth-child(9) { background-color: #fcdacc; }
.colors button:nth-child(10) { background-color: #fab198; }
.colors button:nth-child(11) { background-color: #f89067; }
.colors button:nth-child(12) { background-color: #f56a33; }
.colors button:nth-child(13) { background-color: #f04206; }
.colors button:nth-child(14) { background-color: #cd3208; }
.colors button:nth-child(15) { background-color: #982607; }
.colors button:nth-child(16) { background-color: #671b03; }
.colors button:nth-child(17) { background-color: #fee6ce; }
.colors button:nth-child(18) { background-color: #fbcd9a; }

.folders svg {
    display: block;
    width: 42px;
    height: 44px;
    margin: 8px auto 0;
}

.scrollbar {
    display: flex;
    flex-direction: column;
    align-items: center;
    width: 20px;
    padding: 6px 0 4px;
    background: #f0f0f0;
}

.scrollbar svg {
    flex: none;
    width: 12px;
    height: 10px;
}

.scrollbar .end {
    margin-top: auto;
}

.thumb {
    flex: none;
    width: 19px;
    height: 21px;
    margin-top: 5px;
    background: #cdcdcd;
}

.outer {
    border-left: 1px solid #fff;
}

.second {
    margin-top: 2px;
    border-top: 3px double #777;
}

.second h3 {
    height: 24px;
    margin-top: 3px;
    padding-left: 4px;
    background: #e4e4e5;
    border-top: 1px solid #aaa;
    border-bottom: 1px solid #999;
    font-size: 12px;
    line-height: 20px;
}

.library.short {
    height: 33px;
}

.library.short .swatches {
    height: 66px;
}

/* Status bar */
.status {
    display: flex;
    justify-content: space-between;
    height: 27px;
    overflow: hidden;
    background: #f0f0f0;
    border-top: 1px solid #ccc;
    font-size: 17px;
    line-height: 30px;
}

.status-left {
    display: flex;
    align-items: center;
    gap: 17px;
    padding: 5px 0 0 6px;
}

.status-left svg {
    width: 18px;
    height: 18px;
}

.hint {
    padding-left: 11px;
    margin-left: -4px;
    border-left: 1px solid #888;
    line-height: 18px;
}

.measure {
    display: flex;
    gap: 10px;
    width: 307px;
    padding: 2px 6px 0 0;
}

.measure label {
    padding-left: 11px;
    border-left: 1px solid #888;
}

.measure input {
    flex: 1;
    min-width: 0;
    height: 30px;
    padding-left: 3px;
    background: #fff;
    border: 1px solid #a9bccd;
}
```
